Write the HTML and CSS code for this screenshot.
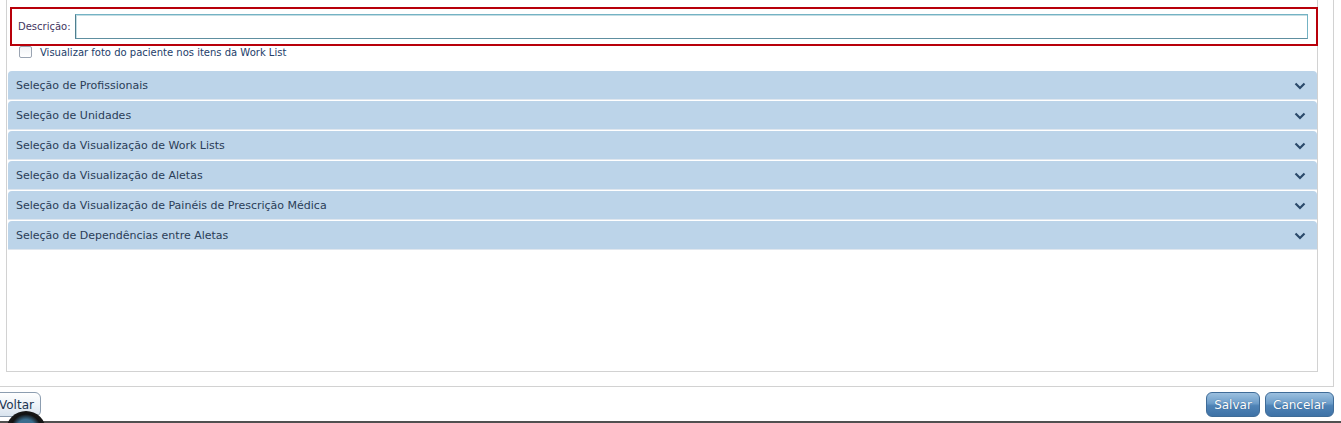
FILE: index.html
```html
<!DOCTYPE html>
<html lang="pt">
<head>
<meta charset="utf-8">
<title>Configuração</title>
<link rel="stylesheet" href="styles.css">
</head>
<body>
<div class="outer">
  <div class="inner">
    <div class="desc-box">
      <label class="desc-label" for="desc">Descrição:</label>
      <input id="desc" class="desc-input" type="text" autofocus>
    </div>
    <div class="check-row">
      <span class="checkbox"></span>
      <span class="check-label">Visualizar foto do paciente nos itens da Work List</span>
    </div>
    <div class="accordion">
      <div class="acc-head"><span>Seleção de Profissionais</span><svg class="chev" viewBox="0 0 12 8" width="12" height="8"><path d="M1.5 1.5 L6 6 L10.5 1.5" fill="none" stroke="#2b4a6b" stroke-width="2.2"/></svg></div>
      <div class="acc-head"><span>Seleção de Unidades</span><svg class="chev" viewBox="0 0 12 8" width="12" height="8"><path d="M1.5 1.5 L6 6 L10.5 1.5" fill="none" stroke="#2b4a6b" stroke-width="2.2"/></svg></div>
      <div class="acc-head"><span>Seleção da Visualização de Work Lists</span><svg class="chev" viewBox="0 0 12 8" width="12" height="8"><path d="M1.5 1.5 L6 6 L10.5 1.5" fill="none" stroke="#2b4a6b" stroke-width="2.2"/></svg></div>
      <div class="acc-head"><span>Seleção da Visualização de Aletas</span><svg class="chev" viewBox="0 0 12 8" width="12" height="8"><path d="M1.5 1.5 L6 6 L10.5 1.5" fill="none" stroke="#2b4a6b" stroke-width="2.2"/></svg></div>
      <div class="acc-head"><span>Seleção da Visualização de Painéis de Prescrição Médica</span><svg class="chev" viewBox="0 0 12 8" width="12" height="8"><path d="M1.5 1.5 L6 6 L10.5 1.5" fill="none" stroke="#2b4a6b" stroke-width="2.2"/></svg></div>
      <div class="acc-head"><span>Seleção de Dependências entre Aletas</span><svg class="chev" viewBox="0 0 12 8" width="12" height="8"><path d="M1.5 1.5 L6 6 L10.5 1.5" fill="none" stroke="#2b4a6b" stroke-width="2.2"/></svg></div>
    </div>
  </div>
</div>
<div class="footer">
  <button class="btn btn-light">Voltar</button>
  <div class="right-btns">
    <button class="btn btn-blue btn-salvar">Salvar</button>
    <button class="btn btn-blue btn-cancel">Cancelar</button>
  </div>
  <span class="bottom-line"></span>
  <span class="orb"></span>
</div>
</body>
</html>
```

FILE: styles.css
```css
html, body {
  margin: 0;
  padding: 0;
  background: #fff;
  overflow: hidden;
}
body {
  width: 1341px;
  height: 423px;
  font-family: "DejaVu Sans", Verdana, sans-serif;
}
.outer {
  box-sizing: border-box;
  width: 1334px;
  height: 387px;
  border-right: 1px solid #d2d2d2;
  border-bottom: 1px solid #d2d2d2;
  padding: 0 15px 15px 6px;
}
.inner {
  box-sizing: border-box;
  height: 372px;
  border: 1px solid #d2d2d2;
  border-top: none;
  padding: 7px 0 0 1px;
}
.desc-box {
  box-sizing: border-box;
  height: 39px;
  margin-left: 2px;
  margin-right: -1px;
  border: 2px solid #b8000a;
  display: flex;
  align-items: center;
  padding: 0 8px 0 6px;
}
.desc-label {
  font-size: 10px;
  color: #43365f;
  width: 57px;
  flex: none;
}
.desc-input {
  flex: 1;
  box-sizing: border-box;
  height: 25px;
  margin: 0;
  border: 1px solid #74b3c4;
  border-left-color: #4f7f8f;
  border-bottom-color: #5e8fa0;
  box-shadow: inset 1px 1px 0 #c4dde4;
  outline: none;
  padding: 0 3px;
  font-family: inherit;
  font-size: 11px;
  background: #fff;
  caret-color: #000;
}
.check-row {
  display: flex;
  align-items: center;
  height: 14px;
  margin: -1px 0 12px 11px;
}
.checkbox {
  box-sizing: border-box;
  width: 13px;
  height: 12px;
  border: 1px solid #9aa4b2;
  border-radius: 2px;
  background: linear-gradient(#f1f3f6, #ffffff);
  margin-right: 8px;
}
.check-label {
  font-size: 10px;
  color: #24406a;
}
.accordion {
  display: flex;
  flex-direction: column;
  gap: 2px;
}
.acc-head {
  box-sizing: border-box;
  height: 28px;
  background: #bcd4e9;
  border-radius: 4px 4px 0 0;
  display: flex;
  align-items: center;
  justify-content: space-between;
  padding: 0 11px 0 8px;
  font-size: 11px;
  color: #2a3d57;
  box-shadow: 0 1px 0 #dfe6ee;
}
.chev {
  display: block;
  margin-top: 1px;
}
.footer {
  box-sizing: border-box;
  display: flex;
  align-items: flex-start;
  justify-content: space-between;
  padding: 5px 7px 0 0;
  position: relative;
  height: 36px;
  overflow: hidden;
}
.btn {
  box-sizing: border-box;
  height: 25px;
  font-family: inherit;
  font-size: 12px;
  border-radius: 6px;
  padding: 0 6px;
  cursor: pointer;
}
.btn-light {
  margin-left: -6px;
  width: 47px;
  padding: 0 0 0 4px;
  text-align: left;
  color: #1c3550;
  border: 1px solid #8c9db0;
  background: linear-gradient(#ffffff, #eef3f8 50%, #d8e3ee);
  position: relative;
  z-index: 1;
}
.right-btns {
  display: flex;
  gap: 5px;
}
.btn-blue {
  color: #fff;
  border: 1px solid #3f6c98;
  background: linear-gradient(#9cc0df, #6d9dc9 45%, #4f83b6 55%, #3e72a6);
  text-shadow: 0 0 1px #2c5680;
}
.btn-salvar { width: 54px; }
.btn-cancel { width: 69px; }
.bottom-line {
  position: absolute;
  left: 0;
  top: 34px;
  width: 1341px;
  height: 2px;
  background: #505050;
}
.orb {
  position: absolute;
  left: 6px;
  top: 24px;
  width: 40px;
  height: 40px;
  border-radius: 50%;
  background: radial-gradient(circle at 50% 45%, #3a6d8e 0 32%, #121212 50%, #2a2a2a 100%);
  z-index: 2;
}
```
